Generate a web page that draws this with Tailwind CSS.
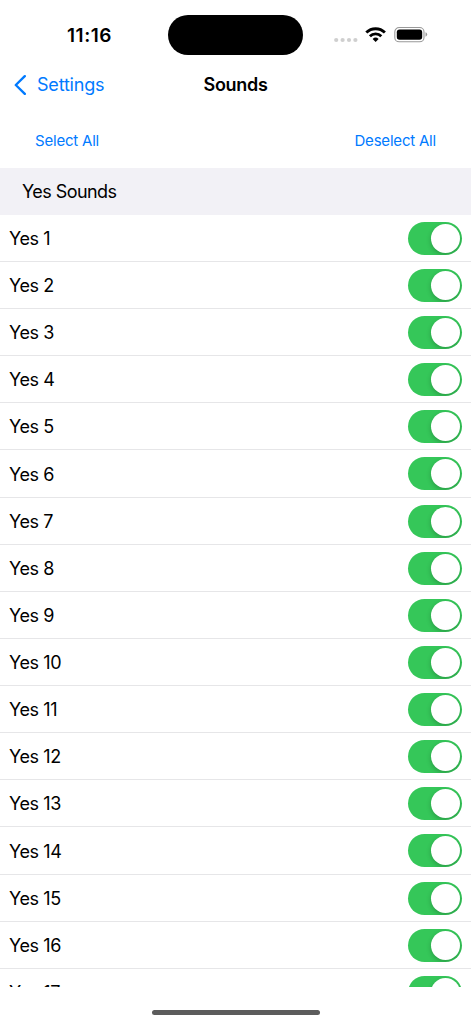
<!DOCTYPE html>
<html lang="en">
<head>
<meta charset="utf-8">
<title>Sounds</title>
<script src="https://cdn.jsdelivr.net/npm/@tailwindcss/browser@4"></script>
</head>
<body class="bg-white text-black font-['Inter',sans-serif] overflow-hidden">
<div class="w-[471px] h-[1024px] flex flex-col overflow-hidden">
  <header class="h-[60px] shrink-0 flex items-start">
    <div class="w-[168px] pt-[24px] pl-[67px] text-[19px] leading-6 font-semibold tracking-[0.55px]">11:16</div>
    <div class="mt-[15px] w-[135px] h-[39.5px] rounded-full bg-black"></div>
    <svg class="ml-[30px] mt-[24px]" width="98" height="22" viewBox="0 0 98 22">
      <g fill="#cfcfcf"><circle cx="3.2" cy="16" r="2.1"/><circle cx="9.6" cy="16" r="2.1"/><circle cx="16" cy="16" r="2.1"/><circle cx="22.4" cy="16" r="2.1"/></g>
      <g fill="none" stroke="#000" stroke-width="2.8"><path d="M33.3 8.6a13.1 13.1 0 0 1 18.6 0"/><path d="M36.9 12.3a8 8 0 0 1 11.4 0"/></g>
      <path d="M39.6 15a4.4 4.4 0 0 1 6 0L42.6 18z" fill="#000"/>
      <rect x="61.8" y="3.5" width="29.2" height="14.3" rx="4.4" fill="none" stroke="#999" stroke-width="1.1"/>
      <rect x="63.8" y="5.5" width="25.4" height="10.3" rx="2.7" fill="#000"/>
      <path d="M92.5 8.3q1.7.6 1.7 2.2t-1.7 2.2z" fill="#999"/>
    </svg>
  </header>
  <nav class="h-[50px] shrink-0 grid grid-cols-[1fr_auto_1fr] items-center">
    <div class="flex items-center pl-[14px] text-[#007aff] text-[18px] leading-6">
      <svg class="mr-[11px] -mt-px" width="12" height="20" viewBox="0 0 12 20" fill="none" stroke="#007aff" stroke-width="2.4" stroke-linecap="round" stroke-linejoin="round"><path d="M10.8 1.2 1.8 10l9 8.8"/></svg>
      <span class="tracking-[-0.2px]">Settings</span>
    </div>
    <h1 class="text-[18px] leading-6 font-semibold tracking-[-0.3px]">Sounds</h1>
    <div></div>
  </nav>
  <div class="h-[58px] shrink-0 flex justify-between items-center px-[35px] pt-[3px] text-[15px] leading-5 tracking-[-0.2px] text-[#007aff]">
    <span>Select All</span><span>Deselect All</span>
  </div>
  <main class="h-[819px] shrink-0 overflow-hidden">
    <h2 class="h-[46.8px] bg-[#f2f1f6] pl-[22px] pt-[2px] flex items-center text-[18px] leading-6 tracking-[-0.55px]">Yes Sounds</h2>
    <div id="sounds"></div>
  </main>
  <footer class="h-[37px] shrink-0 flex justify-center pt-[22.5px]"><div class="w-[168px] h-[5.5px] rounded-full bg-[#5c5c5c]"></div></footer>
</div>
<script>
  const row = n => `
    <div class="h-[47.13px] flex items-center justify-between pt-px pl-[9px] pr-[9px] border-b border-[#e6e6e8] text-[18px] leading-6">
      <span class="pt-[1.2px] tracking-[-0.4px]">Yes ${n}</span>
      <span class="w-[54.5px] h-[33px] rounded-full bg-[#35c759] p-[2px] flex justify-end overflow-hidden"><span class="size-[29px] rounded-full bg-white shadow-[0_2px_5px_rgba(0,0,0,0.22)]"></span></span>
    </div>`;
  document.getElementById('sounds').innerHTML = Array.from({length: 17}, (_, i) => row(i + 1)).join('');
</script>
</body>
</html>
